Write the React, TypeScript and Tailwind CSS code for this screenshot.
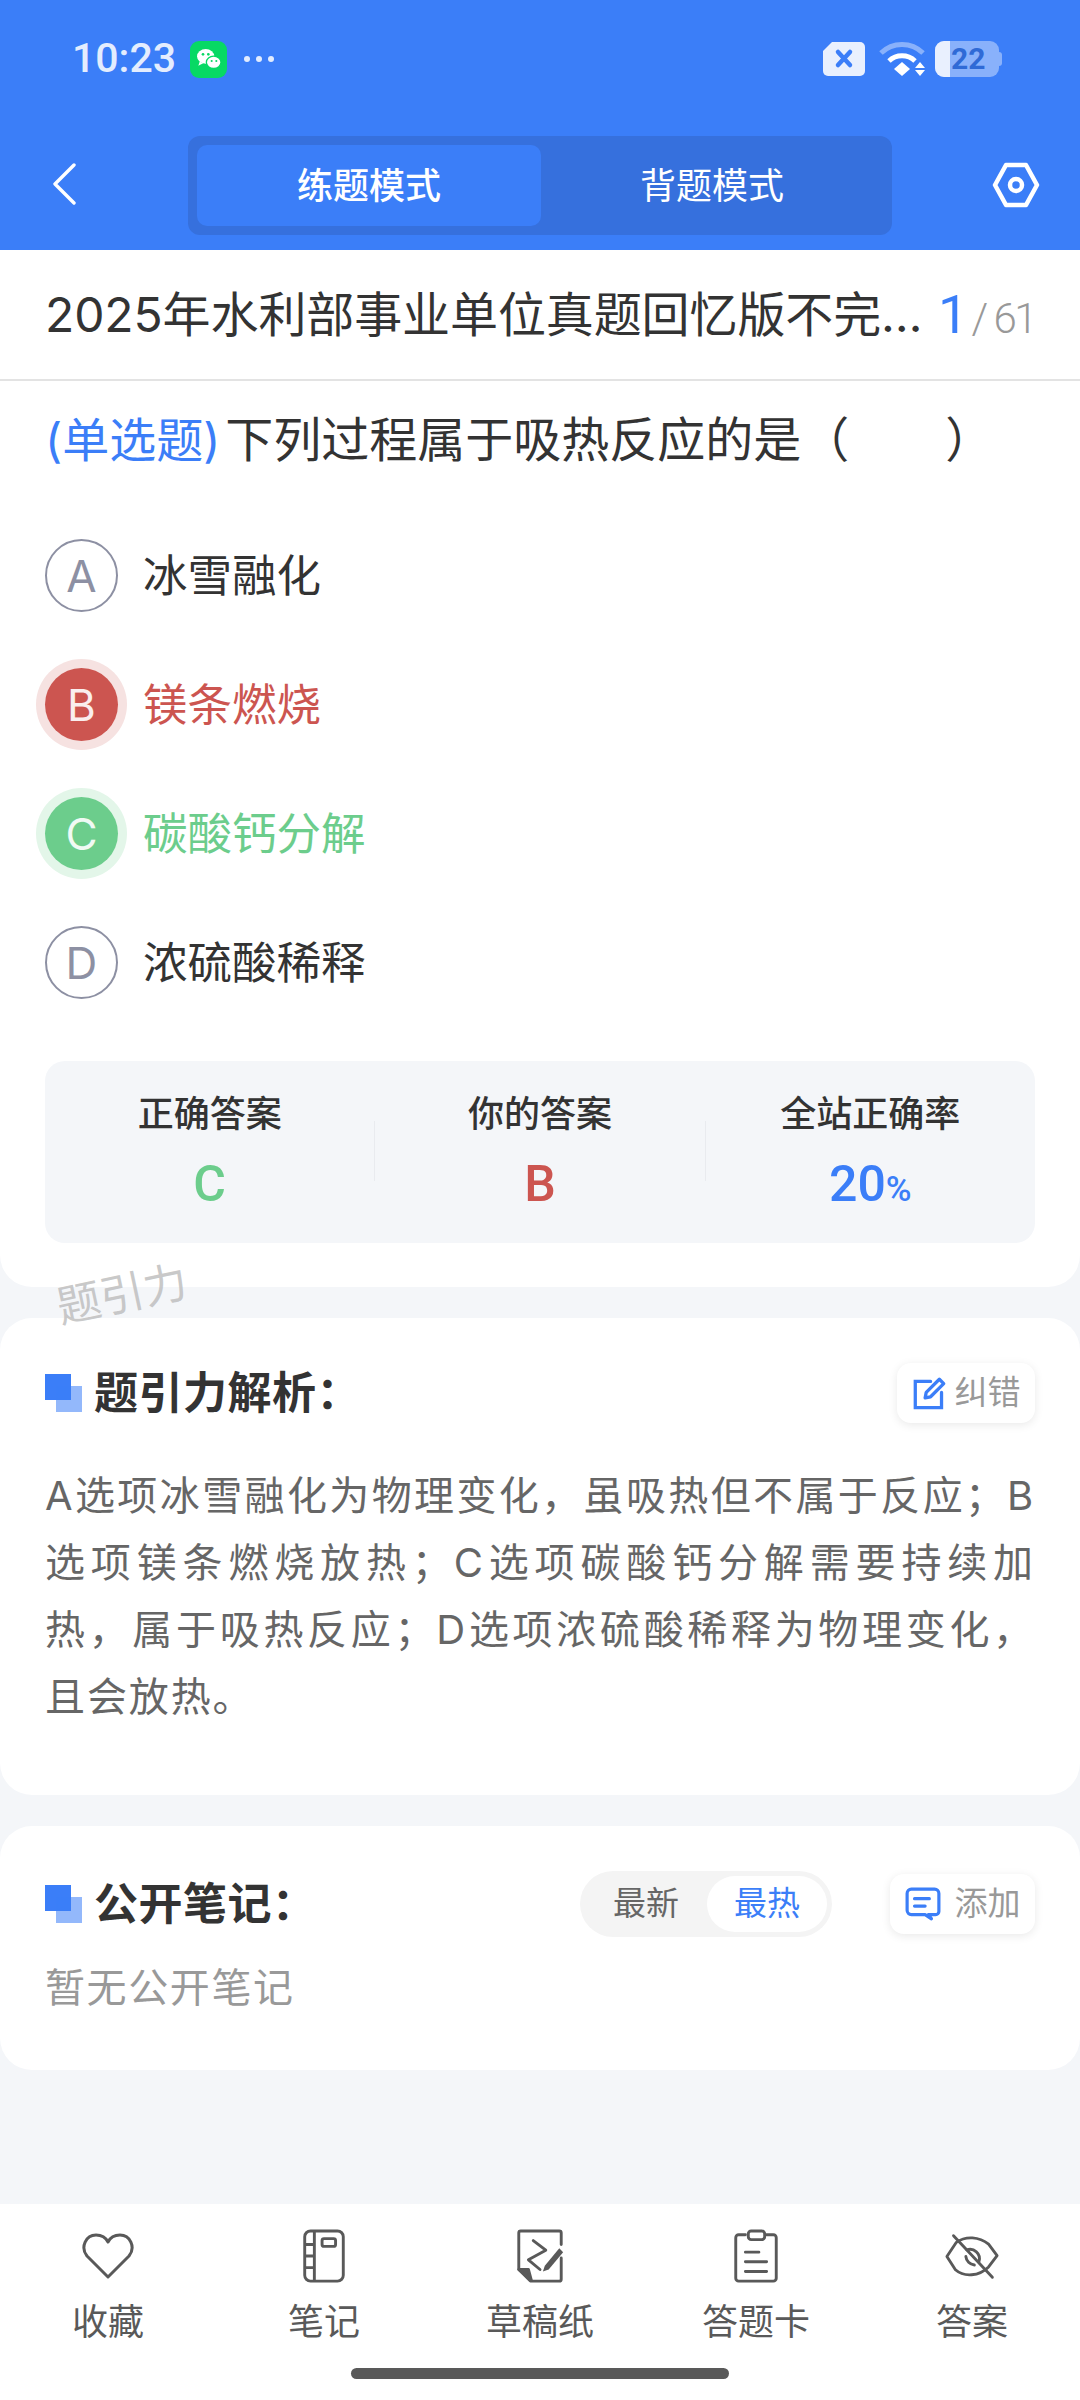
const font = { fontFamily: '"Inter", "Noto Sans CJK SC", sans-serif' };
const narrowFont = { fontFamily: 'Roboto, "Noto Sans CJK SC", sans-serif' };

const options = [
  { key: "A", text: "冰雪融化", state: "idle" },
  { key: "B", text: "镁条燃烧", state: "wrong" },
  { key: "C", text: "碳酸钙分解", state: "right" },
  { key: "D", text: "浓硫酸稀释", state: "idle" },
];

function SectionMark() {
  return (
    <span className="relative block h-[38px] w-[37px] shrink-0">
      <span className="absolute left-0 top-0 h-[26px] w-[26px] bg-[#3b7ef8]" />
      <span className="absolute bottom-0 right-0 h-[26px] w-[26px] bg-[#3b7ef8]/55" />
    </span>
  );
}

function StatusBar() {
  return (
    <div className="flex h-[120px] items-center justify-between pl-[72px] pr-[78px] pb-[2px]">
      <div className="flex items-center">
        <span style={narrowFont} className="text-[41px] font-medium text-[#e4edfe]">10:23</span>
        <span className="ml-[14px] flex h-[37px] w-[37px] items-center justify-center rounded-[9px] bg-[#07d964]">
          <svg viewBox="0 0 24 24" className="h-[32px] w-[32px]" fill="#fff">
            <ellipse cx="9.5" cy="10" rx="6.5" ry="5.5" />
            <path d="M5 14l-1 3 4-2z" />
            <ellipse cx="15.5" cy="14.5" rx="5.5" ry="4.6" stroke="#07d964" strokeWidth="1" />
            <circle cx="7.5" cy="8.5" r="1" fill="#07d964" />
            <circle cx="11.5" cy="8.5" r="1" fill="#07d964" />
            <circle cx="14" cy="13.5" r=".8" fill="#07d964" />
            <circle cx="17.5" cy="13.5" r=".8" fill="#07d964" />
          </svg>
        </span>
        <span className="ml-[17px] flex gap-[6px]">
          <span className="h-[6px] w-[6px] rounded-full bg-white/85" />
          <span className="h-[6px] w-[6px] rounded-full bg-white/85" />
          <span className="h-[6px] w-[6px] rounded-full bg-white/85" />
        </span>
      </div>
      <div className="flex items-center gap-[8px]">
        <svg viewBox="0 0 44 36" className="mr-[5px] h-[36px] w-[44px]">
          <path d="M10 1h28a5 5 0 0 1 5 5v24a5 5 0 0 1-5 5H6a5 5 0 0 1-5-5V10z" fill="#e9f0fe" />
          <path d="M16 11l12 13M28 11L16 24" stroke="#3b7ef8" strokeWidth="4.5" strokeLinecap="round" />
        </svg>
        <svg viewBox="0 0 48 36" className="h-[36px] w-[48px]">
          <path d="M2 12a30 30 0 0 1 42 0" fill="none" stroke="#fff" strokeOpacity=".4" strokeWidth="5" />
          <path d="M10 20a19 19 0 0 1 26 0" fill="none" stroke="#fff" strokeWidth="5" />
          <path d="M15 28l8-7 8 7-8 7z" fill="#fff" />
          <path d="M36 27l5-6 5 6zM36 29l5 6 5-6z" fill="#fff" />
        </svg>
        <div className="relative flex h-[36px] w-[64px] items-center overflow-hidden rounded-[9px] bg-white/40">
          <span className="h-full w-[15px] bg-[#e9f0fe]" />
          <span style={narrowFont} className="ml-[1px] text-[30px] font-bold leading-none text-[#2f6ad6]">22</span>
        </div>
        <span className="-ml-[8px] h-[14px] w-[3px] rounded-r bg-white/40" />
      </div>
    </div>
  );
}

function TopBar() {
  return (
    <div className="flex h-[130px] items-start justify-between pl-[52px] pr-[40px] pt-[16px]">
      <svg viewBox="0 0 24 42" className="mt-[27px] h-[42px] w-[24px]" fill="none" stroke="#fff" strokeWidth="3.4" strokeLinecap="round" strokeLinejoin="round">
        <path d="M22 2L3 21l19 19" />
      </svg>
      <div className="ml-[12px] flex h-[99px] w-[704px] rounded-[12px] bg-[#3670dd] p-[9px]">
        <span className="flex w-[344px] items-center justify-center rounded-[10px] bg-[#3b7ef8] text-[36px] font-medium text-white">练题模式</span>
        <span className="flex flex-1 items-center justify-center text-[36px] text-white">背题模式</span>
      </div>
      <svg viewBox="0 0 48 48" className="mt-[25px] h-[48px] w-[48px]" fill="none" stroke="#fff" strokeWidth="4.5" strokeLinejoin="round">
        <path d="M14 4h20l11 20-11 20H14L3 24z" />
        <circle cx="24" cy="24" r="6" />
      </svg>
    </div>
  );
}

function OptionRow({ item }: { item: (typeof options)[number] }) {
  const wrong = item.state === "wrong";
  const right = item.state === "right";
  return (
    <div className="flex h-[129px] items-center">
      <span
        className={
          wrong
            ? "flex h-[73px] w-[73px] items-center justify-center rounded-full bg-[#cc5550] text-[44px] text-white/90 shadow-[0_0_0_9px_#f6e2e1]"
            : right
              ? "flex h-[73px] w-[73px] items-center justify-center rounded-full bg-[#6ccd8c] text-[44px] text-white/90 shadow-[0_0_0_9px_#e3f6e9]"
              : "flex h-[73px] w-[73px] items-center justify-center rounded-full border-2 border-[#8d90a3] text-[44px] text-[#8d90a3]"
        }
      >
        {item.key}
      </span>
      <span
        className={
          wrong
            ? "ml-[25px] pt-[2px] text-[44.5px] text-[#cc5550]"
            : right
              ? "ml-[25px] pt-[2px] text-[44.5px] text-[#6ccd8c]"
              : "ml-[25px] pt-[2px] text-[44.5px] text-[#333]"
        }
      >
        {item.text}
      </span>
    </div>
  );
}

function StatCell({ label, children }: { label: string; children: React.ReactNode }) {
  return (
    <div className="flex flex-1 flex-col items-center pt-[28px]">
      <span className="text-[36px] font-medium leading-[50px] text-[#333]">{label}</span>
      <div style={narrowFont} className="mt-[18px] h-[54px] text-[50px] font-medium leading-[54px]">{children}</div>
    </div>
  );
}

function Divider() {
  return <span className="mt-[60px] h-[60px] w-px bg-[#e9ebef]" />;
}

function TabIcon({ children, label }: { children: React.ReactNode; label: string }) {
  return (
    <div className="flex w-[216px] flex-col items-center text-[#595959]">
      <span className="flex h-[54px] w-[54px] items-center justify-center">{children}</span>
      <span className="mt-[14px] text-[36px] leading-[50px]">{label}</span>
    </div>
  );
}

export default function App() {
  return (
    <div style={font} className="relative flex h-[2400px] w-[1080px] flex-col overflow-hidden bg-[#f4f6f9]">
      <header className="h-[250px] bg-[#3b7ef8]">
        <StatusBar />
        <TopBar />
      </header>

      <section className="h-[1037px] rounded-b-[32px] bg-white">
        <div className="flex h-[131px] items-center justify-between border-b-2 border-[#e3e3e3] pl-[45px] pr-[45px]">
          <span className="text-[48px] tracking-[-0.1px] text-[#333]">2025年水利部事业单位真题回忆版不完…</span>
          <span style={narrowFont} className="flex items-baseline text-[#999]">
            <span className="text-[54px] text-[#3b7ef8]">1</span>
            <span className="ml-[3px] text-[42px] font-light tracking-[-2.5px]">/ 61</span>
          </span>
        </div>
        <p className="mt-[28px] pl-[45px] text-[48px] leading-[62px] text-[#333]">
          <span className="text-[47px] text-[#3b7ef8]">(单选题)</span>
          <span className="ml-[5px]">下列过程属于吸热反应的是（　　）</span>
        </p>
        <div className="mt-[40px] px-[45px]">
          {options.map((item) => (
            <OptionRow key={item.key} item={item} />
          ))}
        </div>
        <div className="mx-[45px] mt-[34px] flex h-[182px] rounded-[20px] bg-[#f4f6f9]">
          <StatCell label="正确答案">
            <span className="text-[#6ccd8c]">C</span>
          </StatCell>
          <Divider />
          <StatCell label="你的答案">
            <span className="text-[#cc5550]">B</span>
          </StatCell>
          <Divider />
          <StatCell label="全站正确率">
            <span className="text-[#3b7ef8]">
              20<span className="text-[35px]">%</span>
            </span>
          </StatCell>
        </div>
      </section>

      <section className="mt-[31px] h-[477px] rounded-[32px] bg-white px-[45px] pt-[45px]">
        <div className="flex items-center justify-between">
          <div className="flex items-center">
            <SectionMark />
            <span className="ml-[12px] text-[44px] font-bold leading-[60px] tracking-[0.5px] text-[#333]">题引力解析：</span>
          </div>
          <span className="flex h-[60px] w-[138px] items-center justify-center gap-[8px] rounded-[14px] bg-white text-[33px] text-[#999] shadow-[0_2px_10px_rgba(0,0,0,0.09)]">
            <svg viewBox="0 0 32 32" className="h-[35px] w-[35px]" fill="none" stroke="#3b7ef8" strokeWidth="3" strokeLinecap="round">
              <path d="M17 5H3v24h24V15" />
              <path d="M12 20l1-5L25 3l4 4-12 12z" strokeLinejoin="round" />
            </svg>
            纠错
          </span>
        </div>
        <p className="mt-[39px] text-justify text-[40px] leading-[67px] tracking-[1.9px] text-[#666]">
          A选项冰雪融化为物理变化，虽吸热但不属于反应；B选项镁条燃烧放热；C选项碳酸钙分解需要持续加热，属于吸热反应；D选项浓硫酸稀释为物理变化，且会放热。
        </p>
      </section>

      <section className="mt-[31px] h-[244px] rounded-[32px] bg-white px-[45px] pt-[45px]">
        <div className="flex items-center">
          <SectionMark />
          <span className="ml-[12px] text-[44px] font-bold leading-[60px] tracking-[0.5px] text-[#333]">公开笔记：</span>
          <div className="ml-auto flex h-[66px] w-[252px] rounded-full bg-[#f4f4f4] p-[5px] text-[33px]">
            <span className="flex w-[122px] items-center justify-center text-[#666]">最新</span>
            <span className="flex flex-1 items-center justify-center rounded-full bg-white text-[#3b7ef8]">最热</span>
          </div>
          <span className="ml-[58px] flex h-[60px] w-[145px] items-center justify-center gap-[14px] rounded-[14px] bg-white text-[33px] text-[#999] shadow-[0_2px_10px_rgba(0,0,0,0.09)]">
            <svg viewBox="0 0 34 32" className="h-[34px] w-[36px]" fill="none" stroke="#3b7ef8" strokeWidth="3" strokeLinecap="round" strokeLinejoin="round">
              <path d="M6 2h22a4 4 0 0 1 4 4v17a3 3 0 0 1-3 3h-7l3 4-6-4H6a4 4 0 0 1-4-4V6a4 4 0 0 1 4-4z" />
              <path d="M9 11h14M9 18h10" />
            </svg>
            添加
          </span>
        </div>
        <p className="mt-[23px] text-[40px] leading-[56px] tracking-[1.6px] text-[#999]">暂无公开笔记</p>
      </section>

      <nav className="mt-auto h-[196px] bg-white">
        <div className="flex pt-[25px]">
          <TabIcon label="收藏">
            <svg viewBox="0 0 52 48" className="h-[48px] w-[52px]" fill="none" stroke="currentColor" strokeWidth="3" strokeLinejoin="round">
              <path d="M26 45L5 24C-2 15 4 3 14 3c6 0 10 3 12 7 2-4 6-7 12-7 10 0 16 12 9 21z" />
            </svg>
          </TabIcon>
          <TabIcon label="笔记">
            <svg viewBox="0 0 44 56" className="h-[54px] w-[44px]" fill="none" stroke="currentColor" strokeWidth="3" strokeLinejoin="round">
              <rect x="2" y="2" width="40" height="52" rx="6" />
              <path d="M12 2v52M2 16h10M2 28h10M2 40h10" />
              <rect x="20" y="10" width="14" height="8" rx="2" />
            </svg>
          </TabIcon>
          <TabIcon label="草稿纸">
            <svg viewBox="0 0 48 56" className="h-[54px] w-[48px]" fill="none" stroke="currentColor" strokeWidth="3" strokeLinejoin="round" strokeLinecap="round">
              <path d="M46 16V4a2 2 0 0 0-2-2H4a2 2 0 0 0-2 2v38l12 12h30a2 2 0 0 0 2-2V30" />
              <path d="M2 42h10l3 11z" fill="currentColor" />
              <path d="M17 12l13 10-18 10 12 10" />
              <path d="M29 38l-2 6 6-2 15-18-4-4z" fill="currentColor" stroke="none" />
            </svg>
          </TabIcon>
          <TabIcon label="答题卡">
            <svg viewBox="0 0 46 56" className="h-[54px] w-[46px]" fill="none" stroke="currentColor" strokeWidth="3" strokeLinecap="round" strokeLinejoin="round">
              <path d="M12 6H5a3 3 0 0 0-3 3v42a3 3 0 0 0 3 3h36a3 3 0 0 0 3-3V9a3 3 0 0 0-3-3h-7" />
              <rect x="15" y="2" width="17" height="9" rx="3" />
              <path d="M12 24h14M12 34h22M12 44h22" />
            </svg>
          </TabIcon>
          <TabIcon label="答案">
            <svg viewBox="0 0 57 48" className="h-[47px] w-[57px]" fill="none" stroke="currentColor" strokeWidth="3" strokeLinecap="round" strokeLinejoin="round">
              <path d="M12 9C22 2 36 3 46 11l9 12-9 12c-10 10-26 11-35 3L2 24z" />
              <path d="M23 17a10 10 0 0 1 13 12M22 24a10 10 0 0 0 9 9" />
              <path d="M9 2l41 44" />
            </svg>
          </TabIcon>
        </div>
        <div className="mx-auto mt-[21px] h-[11px] w-[378px] rounded-full bg-[#595959]" />
      </nav>

      <span className="absolute left-[56px] top-[1261px] -rotate-[12deg] text-[44px] text-[#bbb]/80">题引力</span>
    </div>
  );
}
